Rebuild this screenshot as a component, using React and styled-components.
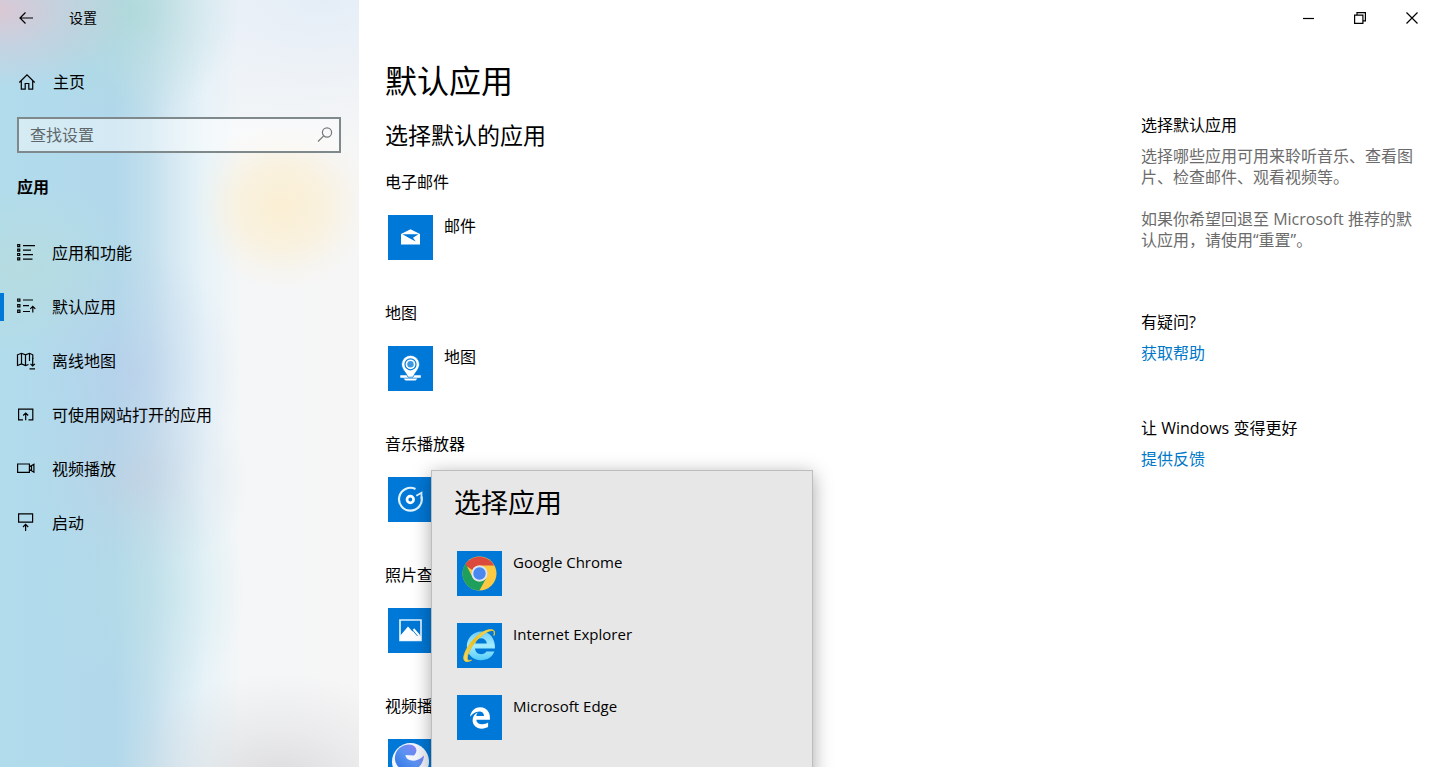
import React from 'react';
import styled, { createGlobalStyle } from 'styled-components';
import { FaEdgeLegacy } from 'react-icons/fa6';

const GlobalStyle = createGlobalStyle`
  * {
    box-sizing: border-box;
  }

  body {
    margin: 0;
    background: #ffffff;
    color: #000000;
    font-family: 'Open Sans', 'Noto Sans CJK SC', sans-serif;
    font-size: 16px;
    line-height: 20px;
  }

  button,
  input {
    font: inherit;
    color: inherit;
  }

  h1,
  h2,
  h3,
  p,
  ul {
    margin: 0;
    padding: 0;
    font-weight: 400;
    list-style: none;
  }
`;

/* icons */

const LineIcon = ({ size = 20, children }) => (
  <svg
    width={size}
    height={size}
    viewBox={`0 0 ${size} ${size}`}
    fill="none"
    stroke="currentColor"
    strokeWidth="1.2"
    aria-hidden="true"
  >
    {children}
  </svg>
);

const BackIcon = () => (
  <LineIcon>
    <path d="M17 10H4M9.5 4.5L4 10l5.500 5.500" />
  </LineIcon>
);

const HomeIcon = () => (
  <LineIcon>
    <path d="M2.300 10.500L10 2.800l7.700 7.700M4.300 8.700v8.500h3.900v-5.700h3.600v5.700h3.900V8.700" />
  </LineIcon>
);

const SearchIcon = () => (
  <LineIcon>
    <circle cx="12" cy="7.500" r="4.600" />
    <path d="M8.700 10.800L3 16.500" />
  </LineIcon>
);

const AppsIcon = () => (
  <LineIcon>
    <path d="M1.700 1.700h2v2h-2zM1.700 6.100h2v2h-2zM1.700 10.500h2v2h-2zM1.700 14.900h2v2h-2z" />
    <path d="M7 2.700h12M7 7.200h8M7 11.600h10M7 16.200h9.500" />
  </LineIcon>
);

const DefaultsIcon = () => (
  <LineIcon>
    <path d="M1.700 2h2.200v2.200H1.700zM1.700 7.600h2.200v2.200H1.700zM1.700 13.200h2.200v2.200H1.700z" />
    <path d="M7 3h10M7 8.700h6M7 14.500h7M16.800 15.500V9.300M14.300 11.800l2.500-2.500 2.500 2.500" />
  </LineIcon>
);

const MapIcon = () => (
  <LineIcon>
    <path d="M12.500 13.500l-3 1-4-1.500-4 1.500V3.800l4-1.500 4 1.500 4-1.500 3.300 1.500V8M5.500 2.300V13M9.500 3.800v10.700M13.500 2.300V10" />
    <path d="M16.700 7v8M14.500 12.800l2.200 2.200 2.200-2.200M13.500 17.800H19" />
  </LineIcon>
);

const WebAppIcon = () => (
  <LineIcon>
    <path d="M7 14.800H2.600V4.200h14.200v10.600H12.500M9.700 15.300V8M7.200 10.500L9.700 8l2.500 2.500" />
  </LineIcon>
);

const VideoIcon = () => (
  <LineIcon>
    <path d="M1.600 5h11.800v8.400H1.600zM13.400 7.800l4.500-2.600v8l-4.500-2.600M15.500 6.800v4.800" />
  </LineIcon>
);

const StartupIcon = () => (
  <LineIcon>
    <path d="M2.600.8h14v8.400h-14zM9.600 18v-6.500M7 14l2.600-2.600 2.600 2.600" />
  </LineIcon>
);

const MinimizeIcon = () => (
  <LineIcon size={12}>
    <path d="M1 6.500h11" />
  </LineIcon>
);

const RestoreIcon = () => (
  <LineIcon size={12}>
    <path d="M.6 3.100h8.300v8.300H.6zM3 3V.6h8.400v8.300H9" />
  </LineIcon>
);

const CloseIcon = () => (
  <LineIcon size={12}>
    <path d="M.5.5l11 11M11.500.5l-11 11" />
  </LineIcon>
);

const TileSvg = ({ children }) => (
  <svg width="45" height="45" viewBox="0 0 45 45" fill="none" aria-hidden="true">
    {children}
  </svg>
);

const MailTile = () => (
  <TileSvg>
    <path d="M13 19L22.500 14.300l9.500 4.700v10.500H13z" fill="#fff" />
    <path d="M14.500 19.300h16L25 22.800l2.800 3.700-5.800-3z" fill="#0078d7" />
  </TileSvg>
);

const MapsTile = () => (
  <TileSvg>
    <path d="M12.300 29.300h20.500v2.400H12.300zM15.500 32.600h14l-2 2h-10z" fill="#fff" />
    <path
      d="M22.500 9.300a9 9 0 0 1 9 9c0 4.800-4.500 8-6.500 12.900h-5c-2-4.900-6.500-8.100-6.500-12.900a9 9 0 0 1 9-9z"
      fill="#fff"
      stroke="#0078d7"
      strokeWidth="0.800"
    />
    <circle cx="22.500" cy="18.300" r="5.500" stroke="#0078d7" strokeWidth="1.200" />
    <circle cx="22.500" cy="18.300" r="3.200" fill="#3d97e0" />
  </TileSvg>
);

const MusicTile = () => (
  <TileSvg>
    <path
      d="M27.500 12A11.400 11.400 0 1 0 33.500 19.500"
      stroke="#dff3ff"
      strokeWidth="2.200"
    />
    <circle cx="22.300" cy="22.500" r="3.300" stroke="#fff" strokeWidth="2.700" />
    <path d="M28.300 18.800l5.200-3v6.500" stroke="#dff3ff" strokeWidth="1.800" />
  </TileSvg>
);

const PhotosTile = () => (
  <TileSvg>
    <path d="M12 12h21v20.500H12z" stroke="#dff3ff" strokeWidth="1.700" />
    <path d="M12 28l8-9.500 4.500 5 2-2.300L33 28.500v4H12z" fill="#fff" />
    <path d="M25.500 21l5.500 6.500" stroke="#fff" strokeWidth="2" />
    <path d="M24 21.500l5.500 6.500" stroke="#0078d7" strokeWidth="0.900" />
  </TileSvg>
);

const PlayerTile = () => (
  <TileSvg>
    <defs>
      <linearGradient id="player" x1="1" y1="0" x2="0" y2="1">
        <stop offset="0" stopColor="#9a7cf5" />
        <stop offset="0.5" stopColor="#5a92f2" />
        <stop offset="1" stopColor="#2b73df" />
      </linearGradient>
    </defs>
    <circle cx="22.500" cy="22.500" r="18.500" fill="#f4f6fe" />
    <path
      d="M11 9.500C17 4 26 4.500 28 9.500c1.200 3-.5 5.500-2 7l-8.500-.5c0 4 5 6.500 10 5.500 3-.6 6-2.500 8.500-5-.5 8-6 15-14 15.500C12 32.500 6 25 7 17.500c.5-3.500 1.800-6 4-8z"
      fill="url(#player)"
    />
  </TileSvg>
);

const ChromeTile = () => (
  <TileSvg>
    <circle cx="22.500" cy="22.500" r="17" fill="#fbc942" />
    <path d="M7.780 14A17 17 0 0 1 37.200 14.500H22.500a8 8 0 0 0-7.200 4.500z" fill="#db4a3c" />
    <path
      d="M8.600 12.700A17 17 0 0 0 22.400 39.500l7-12.800a8 8 0 0 1-13.800-.2z"
      fill="#1e9f5c"
    />
    <circle cx="22.500" cy="22.500" r="8" fill="#d9e6f8" />
    <circle cx="22.500" cy="22.500" r="6.200" fill="#4a88ef" />
  </TileSvg>
);

const ExplorerTile = () => (
  <TileSvg>
    <defs>
      <linearGradient id="explorer" x1="0" y1="0" x2="0" y2="1">
        <stop offset="0" stopColor="#6fcdf8" />
        <stop offset="0.5" stopColor="#a5ecff" />
        <stop offset="1" stopColor="#55cdf8" />
      </linearGradient>
      <linearGradient id="orbit" x1="0" y1="1" x2="1" y2="0">
        <stop offset="0" stopColor="#f6dc70" />
        <stop offset="0.5" stopColor="#e9bd20" />
        <stop offset="1" stopColor="#ffe978" />
      </linearGradient>
    </defs>
    <path
      d="M38 25.500H18c.3 3.500 2.800 5.700 6 5.700 2.500 0 4.400-1 5.300-2.700h8c-2 5.500-7 8.700-13.300 8.700-8 0-14.200-6-14.200-14S16.300 8.500 24.300 8.500 38.300 15 38 25.500zM18.200 20.500h11.700c-.5-3.200-2.700-5.200-5.800-5.200s-5.300 2-5.900 5.200z"
      fill="url(#explorer)"
    />
    <path
      d="M37 12.500c.8-2 .8-4-.3-5-4-3.500-16.700 3-24.200 14C6.500 30 5 37.500 9 38.500c1.500.4 3.500-.2 5.500-1.300-3 .6-4.500 0-4.300-2.300C10.500 29.500 17 18.500 25.500 12c5.500-4.300 10.500-5.700 11.500-3.500.3 1 .3 2.500 0 4z"
      fill="url(#orbit)"
      stroke="#e9c433"
      strokeWidth="1"
    />
  </TileSvg>
);

const EdgeTile = () => <FaEdgeLegacy size={22} color="#fff" aria-hidden="true" />;

/* layout */

const Window = styled.div`
  display: grid;
  grid-template-columns: 359px minmax(0, 1fr);
  height: 100vh;
  overflow: hidden;
`;

const Sidebar = styled.aside`
  background:
    radial-gradient(ellipse 90px 84px at 282px 206px, rgba(252, 238, 206, 0.85), rgba(252, 238, 206, 0.6) 45%, rgba(252, 238, 206, 0.15) 80%, rgba(252, 238, 206, 0) 100%),
    radial-gradient(ellipse 130px 80px at 0 10px, rgba(226, 196, 208, 0.85), rgba(226, 196, 208, 0.35) 50%, rgba(226, 196, 208, 0) 100%),
    radial-gradient(ellipse 110px 110px at 130px 10px, rgba(172, 216, 214, 0.8), rgba(172, 216, 214, 0.35) 50%, rgba(172, 216, 214, 0) 100%),
    radial-gradient(ellipse 130px 90px at 20px 270px, rgba(184, 220, 222, 0.8), rgba(184, 220, 222, 0) 100%),
    radial-gradient(ellipse 110px 130px at 130px 375px, rgba(186, 202, 234, 0.5), rgba(186, 202, 234, 0.2) 50%, rgba(186, 202, 234, 0) 100%),
    radial-gradient(ellipse 110px 90px at 140px 480px, rgba(196, 206, 222, 0.55), rgba(196, 206, 222, 0.2) 50%, rgba(196, 206, 222, 0) 100%),
    radial-gradient(ellipse 100px 120px at 145px 590px, rgba(182, 224, 226, 0.4), rgba(182, 224, 226, 0) 100%),
    radial-gradient(ellipse 170px 110px at 280px 100%, rgba(214, 214, 217, 0.85), rgba(214, 214, 217, 0.35) 50%, rgba(214, 214, 217, 0) 100%),
    radial-gradient(ellipse 260px 150px at 320px 0, rgba(226, 236, 247, 0.9), rgba(226, 236, 247, 0.3) 60%, rgba(226, 236, 247, 0) 100%),
    linear-gradient(
      90deg,
      #b1dcec 0,
      #b1d8eb 115px,
      #c3dfed 150px,
      #d6e9f3 175px,
      #e8f3f8 205px,
      #f4f6f7 240px,
      #f6f6f6 100%
    );
`;

const TitleBar = styled.header`
  display: flex;
  align-items: center;
  height: 36px;
`;

const IconButton = styled.button`
  display: flex;
  align-items: center;
  justify-content: center;
  width: 34px;
  height: 36px;
  padding: 0;
  border: 0;
  background: none;
`;

const SidebarTitleBar = styled(TitleBar)`
  gap: 26px;
  padding-left: 9px;
  font-size: 14px;
`;

const WindowControls = styled(TitleBar)`
  justify-content: flex-end;
  gap: 18px;
`;

const NavLink = styled.a`
  display: flex;
  align-items: center;
  gap: 16px;
  height: 54px;
  padding-left: 12px;
  color: inherit;
  text-decoration: none;
`;

const NavItem = styled.li`
  display: flex;
  align-items: center;
  height: 54px;

  &::before {
    content: '';
    width: 4px;
    height: 28px;
    background: ${(props) => (props.$active ? '#0078d7' : 'transparent')};
  }
`;

const HomeLink = styled(NavLink)`
  margin-top: 19px;
  padding-left: 17px;
`;

const SearchBox = styled.label`
  display: flex;
  align-items: center;
  height: 36px;
  margin: 8px 18px 0 17px;
  padding: 0 4px 0 11px;
  border: 2px solid #7f898c;
  background: rgba(255, 255, 255, 0.45);
  color: #777777;
`;

const SearchInput = styled.input`
  flex: 1;
  min-width: 0;
  padding: 0;
  border: 0;
  outline: 0;
  background: none;

  &::placeholder {
    color: #5f676b;
    opacity: 1;
  }
`;

const NavTitle = styled.h2`
  margin: 24px 0 29px 17px;
  font-size: 16px;
  font-weight: 700;
`;

const Body = styled.div`
  display: flex;
  padding-left: 26px;
`;

const Main = styled.main`
  flex: 1;
  padding-top: 25px;
`;

const PageTitle = styled.h1`
  font-size: 32px;
  line-height: 40px;
`;

const PageSubtitle = styled.h2`
  margin-top: 19px;
  font-size: 23px;
  line-height: 30px;
`;

const Category = styled.section`
  margin-top: 22px;

  & + & {
    margin-top: 43px;
  }
`;

const CategoryTitle = styled.h3`
  font-size: 16px;
`;

const Slot = styled.div`
  position: relative;
  margin-top: 23px;
  padding-left: 3px;
`;

const AppButton = styled.button`
  display: flex;
  gap: 11px;
  padding: 0;
  border: 0;
  background: none;
  line-height: 22px;
  text-align: left;
`;

const Tile = styled.span`
  display: flex;
  align-items: center;
  justify-content: center;
  width: 45px;
  height: 45px;
  background: #0078d7;
`;

const Picker = styled.div`
  position: absolute;
  top: -7px;
  left: 46px;
  z-index: 1;
  width: 382px;
  padding: 14px 22px 48px;
  border: 1px solid #bdbdbd;
  background: #e7e7e7;
  box-shadow: 0 4px 18px rgba(0, 0, 0, 0.35);
`;

const PickerTitle = styled.h2`
  font-size: 27px;
  line-height: 36px;
`;

const PickerList = styled.ul`
  display: grid;
  gap: 27px;
  margin-top: 30px;
  padding-left: 3px;
  font-size: 15px;
`;

const Help = styled.aside`
  flex: 0 0 288px;
  padding: 79px 12px 0 0;
`;

const HelpGroup = styled.section`
  display: grid;
  gap: 11px;
  margin-top: ${(props) => props.$space || 0}px;
`;

const HelpTitle = styled.h2`
  font-size: 16px;
`;

const HelpText = styled.p`
  color: #6b6b6b;
  line-height: 21px;

  & + & {
    margin-top: 10px;
  }
`;

const HelpLink = styled.a`
  color: #0078c8;
  text-decoration: none;
`;

const navItems = [
  { label: '应用和功能', Icon: AppsIcon },
  { label: '默认应用', Icon: DefaultsIcon, active: true },
  { label: '离线地图', Icon: MapIcon },
  { label: '可使用网站打开的应用', Icon: WebAppIcon },
  { label: '视频播放', Icon: VideoIcon },
  { label: '启动', Icon: StartupIcon },
];

const categories = [
  { title: '电子邮件', app: '邮件', Icon: MailTile },
  { title: '地图', app: '地图', Icon: MapsTile },
  { title: '音乐播放器', Icon: MusicTile, open: true },
  { title: '照片查看器', Icon: PhotosTile },
  { title: '视频播放器', Icon: PlayerTile },
];

const choices = [
  { name: 'Google Chrome', Icon: ChromeTile },
  { name: 'Internet Explorer', Icon: ExplorerTile },
  { name: 'Microsoft Edge', Icon: EdgeTile },
];

const AppChoice = ({ name, label, Icon }) => (
  <AppButton type="button" aria-label={name ? undefined : label}>
    <Tile>
      <Icon />
    </Tile>
    {name}
  </AppButton>
);

const AppPicker = () => (
  <Picker role="dialog" aria-labelledby="picker-title">
    <PickerTitle id="picker-title">选择应用</PickerTitle>
    <PickerList>
      {choices.map(({ name, Icon }) => (
        <li key={name}>
          <AppChoice name={name} Icon={Icon} />
        </li>
      ))}
    </PickerList>
  </Picker>
);

const App = () => {
  return (
    <>
      <GlobalStyle />
      <Window lang="zh-CN">
        <Sidebar>
          <SidebarTitleBar>
            <IconButton type="button" aria-label="返回">
              <BackIcon />
            </IconButton>
            设置
          </SidebarTitleBar>
          <HomeLink href="#home">
            <HomeIcon />
            主页
          </HomeLink>
          <SearchBox>
            <SearchInput type="text" placeholder="查找设置" aria-label="查找设置" />
            <SearchIcon />
          </SearchBox>
          <NavTitle>应用</NavTitle>
          <ul>
            {navItems.map(({ label, Icon, active }) => (
              <NavItem key={label} $active={active}>
                <NavLink href="#apps">
                  <Icon />
                  {label}
                </NavLink>
              </NavItem>
            ))}
          </ul>
        </Sidebar>
        <div>
          <WindowControls>
            <IconButton type="button" aria-label="最小化">
              <MinimizeIcon />
            </IconButton>
            <IconButton type="button" aria-label="还原">
              <RestoreIcon />
            </IconButton>
            <IconButton type="button" aria-label="关闭">
              <CloseIcon />
            </IconButton>
          </WindowControls>
          <Body>
            <Main>
              <PageTitle>默认应用</PageTitle>
              <PageSubtitle>选择默认的应用</PageSubtitle>
              {categories.map(({ title, app, Icon, open }) => (
                <Category key={title}>
                  <CategoryTitle>{title}</CategoryTitle>
                  <Slot>
                    <AppChoice name={app} label={title} Icon={Icon} />
                    {open && <AppPicker />}
                  </Slot>
                </Category>
              ))}
            </Main>
            <Help>
              <HelpGroup>
                <HelpTitle>选择默认应用</HelpTitle>
                <HelpText>选择哪些应用可用来聆听音乐、查看图片、检查邮件、观看视频等。</HelpText>
                <HelpText>如果你希望回退至 Microsoft 推荐的默认应用，请使用“重置”。</HelpText>
              </HelpGroup>
              <HelpGroup $space={61}>
                <HelpTitle>有疑问?</HelpTitle>
                <HelpLink href="#help">获取帮助</HelpLink>
              </HelpGroup>
              <HelpGroup $space={55}>
                <HelpTitle>让 Windows 变得更好</HelpTitle>
                <HelpLink href="#feedback">提供反馈</HelpLink>
              </HelpGroup>
            </Help>
          </Body>
        </div>
      </Window>
    </>
  );
};

export default App;
